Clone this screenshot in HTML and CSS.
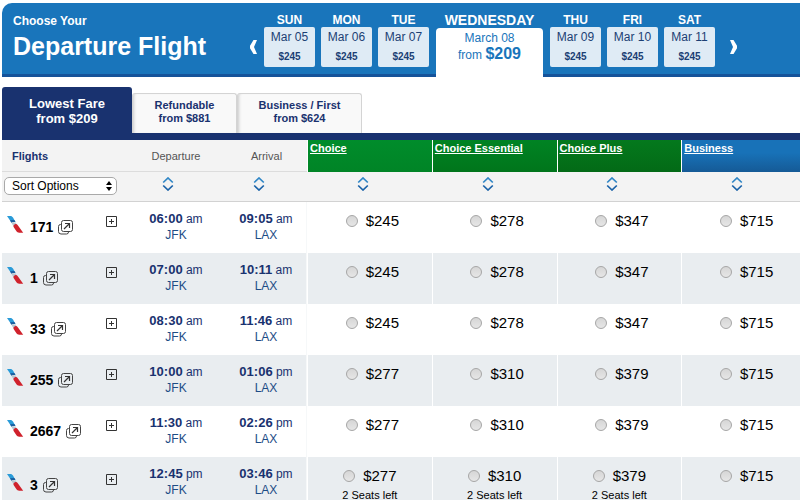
FILE: index.html
```html
<!DOCTYPE html>
<html lang="en">
<head>
  <meta charset="UTF-8">
  <title>Choose Your Departure Flight</title>
  <link rel="stylesheet" href="styles.css">
</head>
<body>
  <svg class="sprites" aria-hidden="true">
    <symbol id="logo" viewBox="0 0 17 17">
      <path d="M0 0h3.2c1.4 0 2.2.6 2.8 1.6l2.6 4.6c-1.6-.6-3.4-.4-4.2.4z" fill="#2a9bd8"/>
      <path d="M3 4.200l1.400 2.600c.8-.8 2.600-1 4.200-.6L7.400 4z" fill="#1c5f9f"/>
      <path d="M4.400 6.800c1-.9 3-.8 4.600.3l.8 1.900-2.400 1.800C6.200 9.800 5 8.200 4.400 6.800z" fill="#b9c6d0"/>
      <path d="M8 8.200c1-.4 2.200 0 2.800 1l5.400 7.600h-4c-1.300 0-2.200-.6-2.900-1.700L6.600 11c-.5-1.200.3-2.400 1.400-2.800z" fill="#d0222c"/>
    </symbol>
    <symbol id="popup" viewBox="0 0 15 15">
      <path d="M5.500 .5h7q2 0 2 2v7q0 2-2 2h-7q-2 0-2-2v-7q0-2 2-2zM3.500 4.500h-1q-2 0-2 2v5q0 2.500 2.500 2.500h5.500q2 0 2-2v-.5" fill="none" stroke="#444"/>
      <path d="M6 9l5.500-5.500M7 3.500h4.500V8" fill="none" stroke="#333" stroke-width="1.200"/>
    </symbol>
    <symbol id="plus" viewBox="0 0 11 11">
      <path d="M.5 .5h10v10h-10zM3 5.500h5M5.500 3v5" fill="none" stroke="#333"/>
    </symbol>
    <symbol id="sort" viewBox="0 0 12 14">
      <path d="M1.200 5.500L6 1l4.800 4.500" fill="none" stroke="#2f86c6" stroke-width="1.700"/>
      <path d="M1.200 8.500L6 13l4.800-4.500" fill="none" stroke="#1a62a8" stroke-width="1.700"/>
    </symbol>
  </svg>

  <div class="page">
    <header class="banner">
      <h1><small>Choose Your</small> Departure Flight</h1>
      <nav class="days">
        <button class="arrow" aria-label="Previous days">
          <svg width="9" height="14" viewBox="0 0 9 14"><path d="M4.500 0H8L5 7l3 7H4.500L1 8.200V5.800z" fill="#fff"/></svg>
        </button>
        <a class="day" href="#"><b>SUN</b><span class="box">Mar 05 <strong>$245</strong></span></a>
        <a class="day" href="#"><b>MON</b><span class="box">Mar 06 <strong>$245</strong></span></a>
        <a class="day" href="#"><b>TUE</b><span class="box">Mar 07 <strong>$245</strong></span></a>
        <a class="day current" href="#"><b>WEDNESDAY</b><span class="box">March 08 <span>from <strong>$209</strong></span></span></a>
        <a class="day" href="#"><b>THU</b><span class="box">Mar 09 <strong>$245</strong></span></a>
        <a class="day" href="#"><b>FRI</b><span class="box">Mar 10 <strong>$245</strong></span></a>
        <a class="day" href="#"><b>SAT</b><span class="box">Mar 11 <strong>$245</strong></span></a>
        <button class="arrow next" aria-label="Next days">
          <svg width="9" height="14" viewBox="0 0 9 14"><path d="M4.500 0H1l3 7-3 7h3.500L8 8.200V5.800z" fill="#fff"/></svg>
        </button>
      </nav>
    </header>

    <nav class="tabs">
      <a class="tab active" href="#">Lowest Fare<br>from $209</a>
      <a class="tab" href="#">Refundable<br>from $881</a>
      <a class="tab wide" href="#">Business / First<br>from $624</a>
    </nav>

    <table class="flights">
      <thead>
        <tr class="titles">
          <th class="col-flight">Flights</th>
          <th class="col-depart">Departure</th>
          <th class="col-arrive">Arrival</th>
          <th class="fare-head choice"><a href="#">Choice</a></th>
          <th class="fare-head essential"><a href="#">Choice Essential</a></th>
          <th class="fare-head plus"><a href="#">Choice Plus</a></th>
          <th class="fare-head business"><a href="#">Business</a></th>
        </tr>
        <tr class="sorting">
          <td>
            <div class="select-wrap">
              <select aria-label="Sort Options">
                <option>Sort Options</option>
              </select>
              <svg width="6" height="10" viewBox="0 0 6 10"><path d="M0 4l3-4 3 4zM0 6h6l-3 4z"/></svg>
            </div>
          </td>
          <td class="sort-left"><button aria-label="Sort by departure"><svg width="12" height="14"><use href="#sort"/></svg></button></td>
          <td class="sort-left"><button aria-label="Sort by arrival"><svg width="12" height="14"><use href="#sort"/></svg></button></td>
          <td class="sort-fare"><button aria-label="Sort by Choice"><svg width="12" height="14"><use href="#sort"/></svg></button></td>
          <td class="sort-fare"><button aria-label="Sort by Choice Essential"><svg width="12" height="14"><use href="#sort"/></svg></button></td>
          <td class="sort-fare"><button aria-label="Sort by Choice Plus"><svg width="12" height="14"><use href="#sort"/></svg></button></td>
          <td class="sort-fare"><button aria-label="Sort by Business"><svg width="12" height="14"><use href="#sort"/></svg></button></td>
        </tr>
      </thead>
      <tbody id="flightRows"></tbody>
    </table>
  </div>

  <script>
    const flights = [
      { number: 171, depart: "06:00 am", arrive: "09:05 am", fares: [245, 278, 347, 715] },
      { number: 1, depart: "07:00 am", arrive: "10:11 am", fares: [245, 278, 347, 715] },
      { number: 33, depart: "08:30 am", arrive: "11:46 am", fares: [245, 278, 347, 715] },
      { number: 255, depart: "10:00 am", arrive: "01:06 pm", fares: [277, 310, 379, 715] },
      { number: 2667, depart: "11:30 am", arrive: "02:26 pm", fares: [277, 310, 379, 715] },
      { number: 3, depart: "12:45 pm", arrive: "03:46 pm", fares: [277, 310, 379, 715], seats: [2, 2, 2, 0] }
    ];

    function timeCell(time, airport) {
      const [clock, half] = time.split(" ");
      return `<td class="time"><div><b>${clock}</b> ${half}</div><div class="airport">${airport}</div></td>`;
    }

    function fareCell(flight, price, index) {
      const left = flight.seats ? flight.seats[index] : 0;
      const id = `fare-${flight.number}-${index}`;
      return `<td class="fare${left ? " limited" : ""}">
        <div class="pick"><input type="radio" name="fare" id="${id}"><label for="${id}">$${price}</label></div>
        ${left ? `<div class="seats">${left} Seats left</div>` : ""}
      </td>`;
    }

    document.getElementById("flightRows").innerHTML = flights.map(flight => `
      <tr>
        <td class="flight-cell">
          <div class="flight">
            <svg class="logo" width="17" height="17"><use href="#logo"/></svg>
            <b>${flight.number}</b>
            <a class="popup" href="#" aria-label="Flight details"><svg width="15" height="15"><use href="#popup"/></svg></a>
            <button class="expand" aria-label="Expand"><svg width="11" height="11"><use href="#plus"/></svg></button>
          </div>
        </td>
        ${timeCell(flight.depart, "JFK")}
        ${timeCell(flight.arrive, "LAX")}
        ${flight.fares.map((price, i) => fareCell(flight, price, i)).join("")}
      </tr>`).join("");
  </script>
</body>
</html>
```

FILE: styles.css
```css
* {
  box-sizing: border-box;
}

body {
  margin: 0;
  padding: 3px 0 0 2px;
  font-family: "Liberation Sans", Arial, sans-serif;
  font-size: 12px;
  background: #fff;
  color: #000;
  overflow-x: hidden;
}

button {
  padding: 0;
  border: 0;
  background: none;
  cursor: pointer;
}

svg {
  display: block;
}

a {
  text-decoration: none;
}

.sprites {
  display: none;
}

/* the last fare column runs under the right edge */
.page {
  margin-right: -6px;
}

/* banner */
.banner {
  display: flex;
  height: 74px;
  background: #1975bb;
  border-top-left-radius: 10px;
  box-shadow: inset 0 -3px #15539a;
  color: #fff;
}

h1 {
  width: 247px;
  margin: 0;
  padding: 10px 0 0 11px;
  font-size: 25px;
  line-height: 34px;
  white-space: nowrap;
}

h1 small {
  display: block;
  font-size: 12px;
  line-height: 16px;
}

.days {
  display: flex;
  gap: 6px;
}

.arrow {
  align-self: flex-start;
  width: 9px;
  margin-top: 37px;
}

.next {
  margin-left: 8px;
}

.day {
  display: flex;
  flex-direction: column;
  width: 51px;
  padding-top: 10px;
  text-align: center;
  color: #fff;
  line-height: 14px;
}

.box {
  display: flex;
  flex-direction: column;
  height: 40px;
  padding-top: 3px;
  background: #dfebf5;
  border-radius: 2px;
  color: #1c3f74;
}

.box strong {
  margin-top: 6px;
  font-size: 10px;
}

.current {
  width: 107px;
  margin: 0 1px;
}

.current b {
  font-size: 14px;
  line-height: 15px;
}

.current .box {
  flex: 1;
  padding-top: 2px;
  background: #fff;
  border-radius: 4px 4px 0 0;
  color: #1975bb;
  line-height: 16px;
}

.current .box strong {
  font-size: 16px;
}

/* tabs */
.tabs {
  display: flex;
  align-items: flex-end;
  margin-top: 10px;
  border-bottom: 7px solid #19326f;
}

.tab {
  width: 105px;
  height: 40px;
  padding-top: 5px;
  background: #f9f9f9;
  border: 1px solid #d4d4d4;
  border-bottom: 0;
  border-radius: 3px 3px 0 0;
  box-shadow: inset 3px 0 3px -2px #ccc;
  color: #19326f;
  font-size: 11px;
  font-weight: bold;
  line-height: 13px;
  text-align: center;
}

.tab.wide {
  width: 125px;
}

.tab.active {
  width: 130px;
  height: 46px;
  padding-top: 9px;
  background: #19326f;
  border: 0;
  box-shadow: none;
  color: #fff;
  font-size: 13px;
  line-height: 15px;
}

/* flight table */
.flights {
  width: 100%;
  table-layout: fixed;
  border-collapse: separate;
  border-spacing: 0;
}

.flights td,
.flights th {
  padding: 0;
  vertical-align: top;
}

.titles th {
  height: 32px;
  background: #f3f3f3;
  border-bottom: 1px solid #dcdcdc;
  color: #555;
  font-size: 11px;
  font-weight: normal;
  vertical-align: middle;
}

.titles .col-flight {
  width: 124px;
  padding-left: 10px;
  color: #19326f;
  font-weight: bold;
  text-align: left;
}

.col-depart {
  width: 100px;
}

.col-arrive {
  width: 81px;
}

.titles .fare-head {
  padding: 2px;
  border-bottom: 0;
  border-left: 1px solid #fff;
  text-align: left;
  vertical-align: top;
}

.fare-head a {
  color: #fff;
  font-weight: bold;
  text-decoration: underline;
}

.titles .choice {
  background: linear-gradient(#008c2b, #008426);
}

.titles .essential {
  background: linear-gradient(#008323, #00751b);
}

.titles .plus {
  background: linear-gradient(#04791d, #036a16);
}

.titles .business {
  background: linear-gradient(#1872b8 40%, #155a96);
}

.sorting td {
  height: 30px;
  background: #f3f3f3;
  border-bottom: 1px solid #d2d2d2;
}

.sorting button {
  display: block;
  margin: 5px auto 0;
}

.flights .sort-left {
  padding-right: 16px;
}

.flights .sort-fare {
  padding-right: 13px;
}

.select-wrap {
  display: grid;
  align-items: center;
  width: 113px;
  margin: 5px 0 0 2px;
}

.select-wrap select,
.select-wrap svg {
  grid-area: 1 / 1;
}

.select-wrap svg {
  justify-self: end;
  margin-right: 5px;
  pointer-events: none;
}

select {
  appearance: none;
  height: 18px;
  padding: 0 7px;
  border: 1px solid #a9a9a9;
  border-radius: 5px;
  background: #fff;
  color: #000;
  font: 12px "Liberation Sans", Arial, sans-serif;
}

tbody td {
  height: 51px;
}

tbody tr:nth-child(even) td {
  background: #e9edf0;
}

.flights .flight-cell {
  padding-bottom: 4px;
  vertical-align: middle;
}

.flight {
  display: flex;
  align-items: flex-start;
  padding: 0 9px 0 5px;
}

.flight b {
  margin: 3px 5px 0 6px;
  font-size: 14px;
  line-height: 16px;
}

.popup {
  margin-top: 4px;
}

.expand {
  margin-left: auto;
}

.flights .time {
  padding-top: 9px;
  color: #19326f;
  line-height: 16px;
  text-align: center;
}

.time b {
  font-size: 13px;
}

.airport {
  color: #1d4c86;
}

.time + .time {
  border-right: 1px solid #f6f8f9;
}

.flights .fare {
  padding-top: 11px;
  border-left: 1px solid #fff;
  text-align: center;
}

.pick {
  display: flex;
  align-items: center;
  justify-content: center;
  padding-left: 5px;
  font-size: 15px;
  line-height: 16px;
}

.flights .limited {
  padding-bottom: 11px;
}

.limited .pick {
  padding-left: 0;
}

.pick input {
  appearance: none;
  width: 12px;
  height: 12px;
  margin: 0 8px 0 0;
  border: 1px solid #a6a6a6;
  border-radius: 50%;
  background: linear-gradient(#d6d6d6, #e6e6e6);
}

.pick input:checked {
  background: radial-gradient(#333 30%, #e0e0e0 35%);
}

.seats {
  margin-top: 5px;
  font-size: 11px;
  line-height: 13px;
}
```
